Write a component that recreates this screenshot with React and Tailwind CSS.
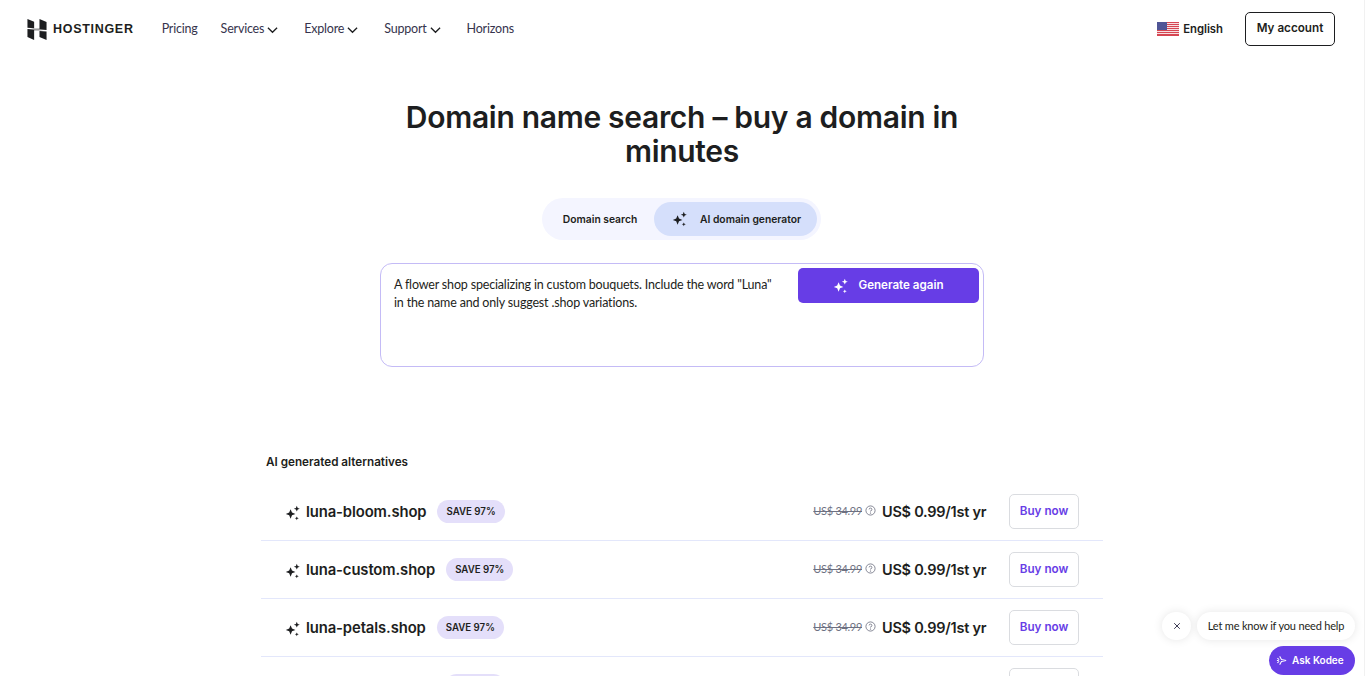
import React from "react";

function Sparkle({ className }) {
  return (
    <svg viewBox="0 0 16 16" fill="currentColor" className={className}>
      <path d="M5.6 4.2 7 7.5 10.4 8.9 7 10.3 5.6 13.8 4.2 10.3 0.8 8.9 4.2 7.5Z" />
      <path d="M11.8 0.8 12.7 2.9 14.8 3.7 12.7 4.5 11.8 6.6 10.9 4.5 8.8 3.7 10.9 2.9Z" />
      <path d="M11.8 11.4 12.4 12.8 13.8 13.3 12.4 13.8 11.8 15.2 11.2 13.8 9.8 13.3 11.2 12.8Z" />
    </svg>
  );
}

function Chevron() {
  return (
    <svg viewBox="0 0 12 8" className="w-[11px] h-[8px] ml-[3px] mt-[1px]" fill="none">
      <path d="M1 1.5 6 6.5 11 1.5" stroke="#1d1e20" strokeWidth="1.4" />
    </svg>
  );
}

function Logo() {
  return (
    <svg viewBox="0 0 20 22" className="w-[20px] h-[21px]" fill="#1d1e20">
      <path d="M0 0 7 3V9.6L0 9.2Z" />
      <path d="M12.6 0 20 3.2V11.4L3.5 10.2H12.6Z" />
      <path d="M0 10.4 16.5 11.7H7V22L0 18.8Z" />
      <path d="M12.6 12.6 20 13.2V22L12.6 18.8Z" />
    </svg>
  );
}

function Flag() {
  return (
    <svg viewBox="0 0 22 14" className="w-[22px] h-[14px]">
      <rect width="22" height="14" fill="#f7dfe1" />
      <g fill="#d64653">
        <rect y="0" width="22" height="1" />
        <rect y="2" width="22" height="1" />
        <rect y="4" width="22" height="1" />
        <rect y="6" width="22" height="1" />
        <rect y="8" width="22" height="1" />
        <rect y="10" width="22" height="1" />
        <rect y="12" width="22" height="2" />
      </g>
      <rect width="10" height="8" fill="#4f5596" />
    </svg>
  );
}

function Row({ name }) {
  return (
    <div className="flex items-center h-[58px] pl-[24px] pr-[24px] border-b border-[#e3e7fb] shrink-0">
      <Sparkle className="w-[16px] h-[16px] text-[#1d1e20] mt-[2px] mr-[5px]" />
      <span className="text-[14.8px] pt-[1px] font-semibold text-[#1d1e20] tracking-[-0.1px]">{name}</span>
      <span className="ml-[11px] h-[23px] pt-[1px] rounded-full bg-[#e4dffa] flex items-center px-[9px] text-[9.7px] font-semibold text-[#1d1e20]">SAVE 97%</span>
      <div className="ml-auto flex items-center">
        <span className="font-['Lato',sans-serif] text-[11px] tracking-[-0.3px] text-[#6d7081] line-through">US$ 34.99</span>
        <svg viewBox="0 0 12 12" className="w-[11px] h-[11px] ml-[3px] mb-[2px]" fill="none" stroke="#6d7081" strokeWidth="0.9">
          <circle cx="6" cy="6" r="5" />
          <path d="M4.5 4.8A1.5 1.5 0 1 1 6 6.4V7" />
          <circle cx="6" cy="8.8" r="0.3" />
        </svg>
        <span className="ml-[6px] w-[104px] whitespace-nowrap text-[14.5px] font-semibold text-[#1d1e20] tracking-[-0.25px]">US$ 0.99/1st yr</span>
        <button className="ml-[23px] w-[70px] h-[35px] rounded-[5px] border border-[#dadce0] bg-white text-[#673de6] text-[11.7px] font-semibold">Buy now</button>
      </div>
    </div>
  );
}

function PartialRow() {
  return (
    <div className="flex items-start h-[58px] pl-[184px] pr-[24px] shrink-0">
      <span className="mt-[17px] w-[60px] h-[23px] rounded-full bg-[#e4dffa]" />
      <span className="ml-auto mt-[11px] w-[70px] h-[35px] rounded-[5px] border border-[#dadce0] bg-white" />
    </div>
  );
}

export default function App() {
  return (
    <div className="h-[676px] overflow-hidden bg-white relative font-['Inter',sans-serif] text-[#1d1e20]">
      <div className="w-[1364px] h-[676px] border-r border-[#f1f1f1] box-content">
        <header className="h-[58px] flex items-center pl-[27px] pr-[29px]">
          <Logo />
          <span className="ml-[6px] text-[12.5px] font-bold tracking-[0.7px] font-['Liberation_Sans',sans-serif]">HOSTINGER</span>
          <nav className="ml-[28px] flex items-center text-[12.5px] tracking-[-0.2px] text-[#36344d] font-['Lato',sans-serif]">
            <span>Pricing</span>
            <span className="ml-[23px] flex items-center">Services<Chevron /></span>
            <span className="ml-[26px] flex items-center">Explore<Chevron /></span>
            <span className="ml-[26px] flex items-center">Support<Chevron /></span>
            <span className="ml-[26px]">Horizons</span>
          </nav>
          <div className="ml-auto flex items-center">
            <Flag />
            <span className="ml-[4px] text-[11.3px] font-semibold">English</span>
            <button className="ml-[22px] w-[90px] h-[34px] rounded-[5px] border border-[#1d1e20] text-[11.7px] font-semibold">My account</button>
          </div>
        </header>

        <h1 className="mt-[42px] mx-auto w-[600px] text-center text-[30px] leading-[34px] font-semibold tracking-[-0.3px]">
          Domain name search – buy a domain in minutes
        </h1>

        <div className="mt-[30px] ml-[542px] w-[279px] h-[42px] rounded-full bg-[#f4f5ff] flex items-center pl-[4px] pr-[4px] text-[10.3px] font-semibold">
          <span className="w-[108px] text-center pt-[1px]">Domain search</span>
          <span className="w-[163px] h-[34px] rounded-full bg-[#d5dffb] flex items-center pl-[18px]">
            <Sparkle className="w-[16px] h-[16px] mr-[12px]" />
            <span className="pt-[1px]">AI domain generator</span>
          </span>
        </div>

        <div className="mt-[23px] ml-[380px] w-[604px] h-[104px] rounded-[12px] border border-[#c4bbf6] flex items-start pt-[4px] pr-[4px]">
          <p className="w-[385px] ml-[13px] mt-[8px] font-['Lato',sans-serif] text-[12.5px] tracking-[-0.17px] leading-[17.5px] text-[#1d1e20]">
            A flower shop specializing in custom bouquets. Include the word "Luna" in the name and only suggest .shop variations.
          </p>
          <button className="ml-auto w-[181px] h-[35px] rounded-[5px] bg-[#673de6] text-white text-[11.6px] font-semibold flex items-center justify-center">
            <Sparkle className="w-[16px] h-[16px] mr-[9px]" />
            Generate again
          </button>
        </div>

        <div className="mt-[88px] ml-[261px] w-[842px]">
          <h2 className="ml-[5px] text-[11.7px] leading-[15px] font-semibold">AI generated alternatives</h2>
          <div className="mt-[13px] flex flex-col">
            <Row name="luna-bloom.shop" />
            <Row name="luna-custom.shop" />
            <Row name="luna-petals.shop" />
            <PartialRow />
          </div>
        </div>
      </div>

      <div className="absolute left-[1162px] top-[612px] w-[29px] h-[28px] rounded-full bg-white shadow-[0_0_10px_rgba(0,0,0,0.1)] flex items-center justify-center">
        <svg viewBox="0 0 10 10" className="w-[8px] h-[8px]" fill="none" stroke="#36344d" strokeWidth="1.2">
          <path d="M1.5 1.5 8.5 8.5M8.5 1.5 1.5 8.5" />
        </svg>
      </div>
      <div className="absolute left-[1197px] top-[612px] w-[158px] h-[28px] rounded-full bg-white shadow-[0_0_10px_rgba(0,0,0,0.1)] flex items-center justify-center font-['Lato',sans-serif] text-[11px] tracking-[-0.18px] text-[#1d1e20]">
        Let me know if you need help
      </div>
      <div className="absolute left-[1269px] top-[646px] w-[86px] h-[29px] rounded-full bg-[#673de6] text-white text-[10px] font-semibold flex items-center pl-[7px]">
        <svg viewBox="0 0 12 12" className="w-[11px] h-[11px] mr-[5px]" fill="none" stroke="#fff" strokeWidth="1.1">
          <path d="M4 1.5 6 5 11 6 6 7 4 10.5M1.5 3.5 3.5 5M1 6H3M1.5 8.5 3.5 7" />
        </svg>
        Ask Kodee
      </div>
    </div>
  );
}
